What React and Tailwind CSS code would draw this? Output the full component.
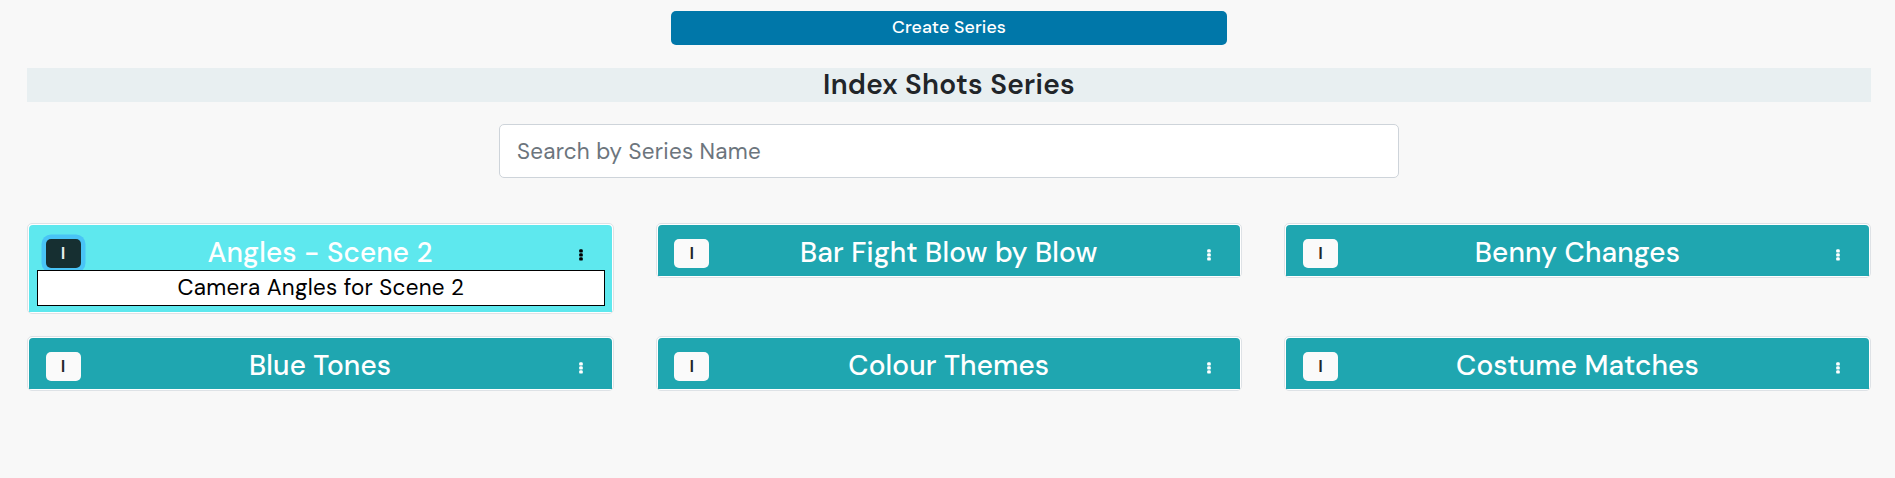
import { useState } from "react";

const SERIES = [
  { name: "Angles - Scene 2", detail: "Camera Angles for Scene 2" },
  { name: "Bar Fight Blow by Blow" },
  { name: "Benny Changes" },
  { name: "Blue Tones" },
  { name: "Colour Themes" },
  { name: "Costume Matches" },
];

function Dots({ dark }) {
  return (
    <svg viewBox="0 0 4 12" className={`h-3 w-1 ${dark ? "fill-black" : "fill-white"}`}>
      <rect x="0.2" y="0.2" width="3.6" height="3.4" rx="1.2" />
      <rect x="0.2" y="4.2" width="3.6" height="3.4" rx="1.2" />
      <rect x="0.2" y="8.2" width="3.6" height="3.4" rx="1.2" />
    </svg>
  );
}

function SeriesCard({ name, detail, open, onToggle }) {
  return (
    <div className="rounded-[5px] border border-[#dee2e6] bg-white p-px">
      <div className={`rounded-t-[4px] ${open ? "h-[87px] bg-[#5ee8ee]" : "h-[51px] bg-[#1fa6b0]"}`}>
        <div className="flex h-[45px] items-start pt-[14px] pr-[29px] pl-[16.6px]">
          <button
            onClick={onToggle}
            className={`h-[29px] w-[35px] rounded-[5px] pb-px text-[17.5px] leading-[28px] font-semibold ${
              open ? "bg-[#162f31] text-[#e8eff1] ring-[4.5px] ring-[#49c4f6]" : "bg-[#fafafa] text-[#212529]"
            }`}
          >
            I
          </button>
          <h2 className="-mt-[3px] flex-1 pr-[19px] text-center text-[28px] leading-[34px] font-medium tracking-[0.13px] text-white">
            {name}
          </h2>
          <div className="pt-[10px]">
            <Dots dark={open} />
          </div>
        </div>
        {open && (
          <p className="relative mr-[7px] ml-2 h-9 border border-black bg-white text-center text-[22.4px] leading-[34px] tracking-[0.26px] text-black">
            {detail}
          </p>
        )}
      </div>
    </div>
  );
}

export default function App() {
  const [openName, setOpenName] = useState("Angles - Scene 2");
  return (
    <main className="h-[478px] bg-[#f8f8f8] pt-[11px] pr-6 pl-[27px] font-['DM_Sans',Inter,sans-serif]">
      <div className="flex flex-col items-center">
        <button className="h-[34px] w-[556px] rounded-[5px] bg-[#0077a9] pb-[2px] text-[17.8px] leading-[32px] font-medium tracking-[0.12px] text-white">
          Create Series
        </button>
        <h1 className="mt-[23px] h-[34px] w-full bg-[#e8eff1] text-center text-[28px] leading-[34px] font-semibold tracking-[0.3px] text-[#212529]">
          Index Shots Series
        </h1>
        <input
          placeholder="Search by Series Name"
          className="mt-[22px] h-[54px] w-[900px] rounded-[5px] border border-[#ced4da] bg-white px-[17px] text-[22.4px] tracking-[0.26px] text-[#212529] placeholder:text-[#6c757d]"
        />
      </div>
      <div className="mt-[45px] grid grid-cols-3 items-start gap-x-[42px] gap-y-[22px]">
        {SERIES.map((s) => (
          <SeriesCard
            key={s.name}
            {...s}
            open={Boolean(s.detail) && openName === s.name}
            onToggle={() => setOpenName(openName === s.name ? null : s.name)}
          />
        ))}
      </div>
    </main>
  );
}
